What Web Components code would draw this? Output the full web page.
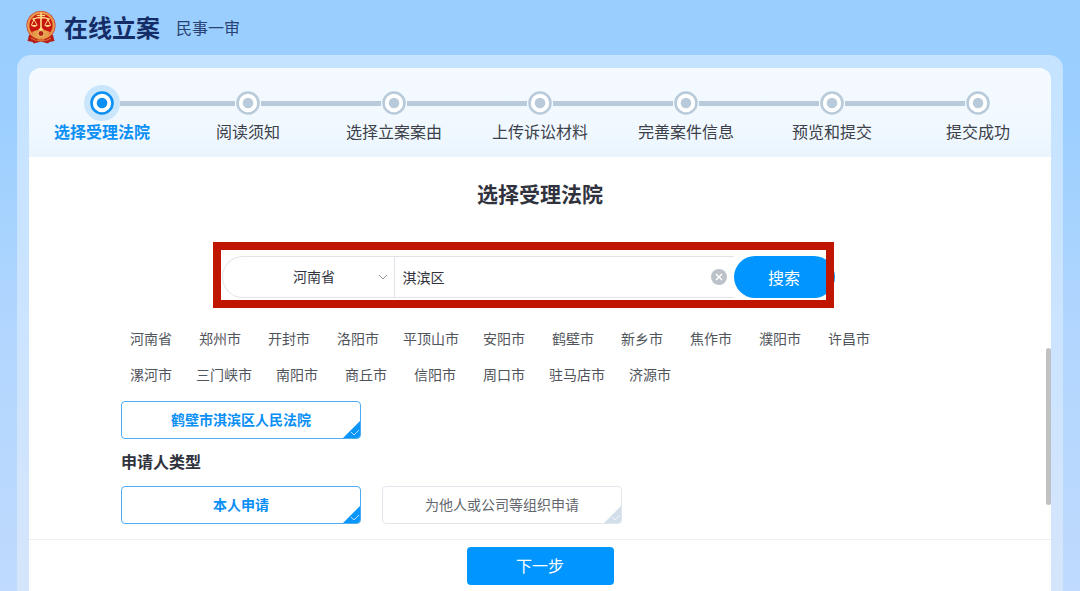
<!DOCTYPE html>
<html lang="zh-CN">
<head>
<meta charset="utf-8">
<meta name="viewport" content="width=device-width, initial-scale=1">
<title>在线立案</title>
<style>
  body {
    margin: 0;
    color: #30333d;
    font: 14px/20px "Noto Sans CJK SC", "Noto Sans", sans-serif;
    background: #a5d2ff;
  }
</style>
</head>
<body>
<filing-app></filing-app>

<script>
const define = (name, html, setup) => {
  const template = document.createElement('template');
  template.innerHTML = html;
  customElements.define(name, class extends HTMLElement {
    constructor() {
      super();
      this.attachShadow({ mode: 'open' }).append(template.content.cloneNode(true));
    }
    connectedCallback() {
      if (setup && !this.ready) setup(this, this.shadowRoot);
      this.ready = true;
    }
  });
};

define('court-emblem', `
  <style>
    :host { display: block; width: 30px; height: 34px; }
    svg { display: block; width: 100%; height: 100%; }
  </style>
  <svg viewBox="0 0 30 34" aria-hidden="true">
    <path d="M3 25 1.500 31l5 1 1.500 1.500 7-2 7 2 1.500-1.500 5-1L27 25z" fill="#b51f18"/>
    <path d="M5 28l5 2.500M25 28l-5 2.500" stroke="#e8803a" stroke-width="1"/>
    <circle cx="15" cy="15.500" r="14.500" fill="#c92a1d"/>
    <circle cx="15" cy="15.500" r="12.800" fill="none" stroke="#e99a4b" stroke-width="2.200"/>
    <circle cx="15" cy="15" r="11" fill="#c8160f"/>
    <path d="M6 22q9-5 18 0l-3 5q-6 3-12 0z" fill="#e6a04c"/>
    <circle cx="15" cy="23.500" r="3" fill="#b32017" stroke="#f3c76c"/>
    <g fill="none" stroke="#ffdc85" stroke-width="1.600" stroke-linecap="round">
      <path d="M15 3v17M11.500 5.500h7M7 9q8-3 16 0"/>
      <path d="M8 9.500 5.500 15M8 9.500l3 5.500M22 9.500 19 15M22 9.500l2.500 5.500" stroke-width="1"/>
    </g>
    <path d="M5 15h6.500q-3 4-6.500 0zM18.500 15H25q-3.500 4-6.500 0zM12 20l3-3 3 3z" fill="#ffdc85"/>
    <path d="M10 30.500q5-4 10 0-5 2-10 0z" fill="#d9702f"/>
  </svg>`);

define('app-header', `
  <style>
    :host { display: flex; align-items: center; height: 53px; padding: 0 26px 2px; color: #142d66; }
    h1 { margin: 0 16px 0 8px; font-size: 24px; line-height: 32px; font-weight: 700; }
    span { font-size: 16px; line-height: 24px; color: #2a4272; }
  </style>
  <court-emblem></court-emblem>
  <h1><slot name="title"></slot></h1>
  <span><slot></slot></span>`);

define('progress-step', `
  <style>
    :host { display: grid; justify-items: center; grid-template-rows: 36px 20px; color: #3c4049; --tone: #b9cbda; --halo: transparent; }
    :host([current]) { color: #0a8ff5; font-weight: 700; --tone: #0a8ff5; --halo: #cae6fc; }
    .rail { display: grid; grid-template-columns: 1fr 36px 1fr; align-items: center; width: 100%; }
    .bar { height: 5px; background: #b9cbda; }
    .bar.before { margin-right: -5px; }
    .bar.after { margin-left: -5px; }
    :host([current]) .after { margin-left: 0; }
    :host([first]) .before, :host([last]) .after { visibility: hidden; }
    svg { display: block; width: 36px; height: 36px; }
    .label { font-size: 16px; line-height: 20px; white-space: nowrap; }
  </style>
  <div class="rail">
    <div class="bar before"></div>
    <svg viewBox="0 0 36 36" aria-hidden="true">
      <circle cx="18" cy="18" r="18" fill="var(--halo)"/>
      <circle cx="18" cy="18" r="10.500" fill="#fff" stroke="var(--tone)" stroke-width="2.600"/>
      <circle cx="18" cy="18" r="5.300" fill="var(--tone)"/>
    </svg>
    <div class="bar after"></div>
  </div>
  <div class="label"><slot></slot></div>`);

define('progress-steps', `
  <style>
    :host {
      display: grid; grid-auto-flow: column; grid-auto-columns: minmax(0, 1fr);
      padding: 17px 0 16px; border-radius: 12px 12px 0 0;
      background: linear-gradient(#f4faff, #f0f8ff 75%, #e9f4fd);
    }
  </style>
  <slot></slot>`);

define('court-search', `
  <style>
    :host { display: block; position: relative; width: 60%; }
    form { display: flex; height: 42px; }
    .field {
      display: flex; flex: 1; min-width: 0; box-sizing: border-box;
      border: 1px solid #e1e3e8; border-right: 0; border-radius: 21px 0 0 21px; background: #fff;
    }
    .province { display: grid; grid-template-columns: 1fr 16px; align-items: center; width: 172px; box-sizing: border-box; border-right: 1px solid #dfe2e8; }
    select, input, button { font: inherit; color: inherit; border: 0; margin: 0; outline: 0; background: none; }
    select { appearance: none; grid-area: 1 / 1 / 2 / 3; width: 100%; height: 40px; padding: 0 0 2px 12px; text-align-last: center; }
    .chevron { grid-area: 1 / 2; width: 10px; height: 6px; pointer-events: none; }
    input { flex: 1; min-width: 0; padding: 0 8px; }
    .clear { display: grid; place-items: center; width: 30px; padding: 0; }
    .clear svg { width: 16px; height: 16px; }
    .go { width: 101px; padding: 0; border-radius: 21px; font-size: 16px; color: #fff; background: #0095ff; }
    .marker { position: absolute; inset: -14px 1px -10px -9px; border: 8px solid #c01600; pointer-events: none; }
  </style>
  <form>
    <div class="field">
      <div class="province">
        <select aria-label="省份"><option>河南省</option></select>
        <svg class="chevron" viewBox="0 0 10 6" fill="none" stroke="#92969d" aria-hidden="true"><path d="M1 1l4 4 4-4"/></svg>
      </div>
      <input type="text" aria-label="法院名称" value="淇滨区">
      <button class="clear" type="button" aria-label="清空">
        <svg viewBox="0 0 16 16" aria-hidden="true"><circle cx="8" cy="8" r="8" fill="#bcc2ca"/><path d="M5 5l6 6M11 5l-6 6" stroke="#fff" stroke-width="1.500"/></svg>
      </button>
    </div>
    <button class="go" type="submit">搜索</button>
  </form>
  <div class="marker"></div>`, (host, root) => {
    const input = root.querySelector('input');
    root.querySelector('.clear').onclick = () => { input.value = ''; input.focus(); };
    root.querySelector('form').onsubmit = event => event.preventDefault();
  });

define('city-list', `
  <style>
    :host { display: block; }
    nav { display: flex; flex-wrap: wrap; gap: 16px 21px; padding: 0 6px; max-width: 760px; }
    a { min-width: 48px; text-align: center; color: #50545b; text-decoration: none; white-space: nowrap; }
  </style>
  <nav aria-label="城市"></nav>`, (host, root) => {
    const nav = root.querySelector('nav');
    for (const city of host.getAttribute('cities').split(' ')) {
      const link = document.createElement('a');
      link.href = '#';
      link.textContent = city;
      nav.append(link);
    }
  });

define('choice-group', `
  <style>
    :host { display: block; }
    fieldset { display: flex; flex-wrap: wrap; gap: 21px; margin: 0; padding: 0; border: 0; min-width: 0; }
    label {
      display: grid; grid-template-columns: 1fr; place-items: center; position: relative;
      width: 240px; height: 38px; padding-bottom: 2px; box-sizing: border-box; overflow: hidden;
      border: 1px solid #e1e6ed; border-radius: 4px; background: #fff; color: #64676d; --mark: #d2deea;
    }
    label:has(:checked) { border-color: #4eadf3; color: #0a8ff5; font-weight: 700; --mark: #0a95fa; }
    input { position: absolute; inset: 0; margin: 0; appearance: none; }
    svg { position: absolute; right: 0; bottom: 0; width: 17px; height: 17px; }
  </style>
  <fieldset></fieldset>`, (host, root) => {
    const set = root.querySelector('fieldset');
    set.setAttribute('aria-label', host.getAttribute('name'));
    host.getAttribute('options').split(' ').forEach((text, i) => {
      const label = document.createElement('label');
      label.innerHTML = `<input type="radio" name="choice"><span></span>
        <svg viewBox="0 0 17 17" aria-hidden="true"><path d="M17 0v17H0z" fill="var(--mark)"/><path d="M8 11l3 3 5-5" fill="none" stroke="#fff" stroke-opacity=".7"/></svg>`;
      label.querySelector('input').checked = i === 0;
      label.querySelector('span').textContent = text;
      set.append(label);
    });
  });

define('form-footer', `
  <style>
    :host { display: flex; justify-content: center; padding: 7px 0 6px; border-top: 1px solid #f0f1f4; }
    button { width: 147px; height: 38px; padding: 0 0 2px; border: 0; border-radius: 4px; font: inherit; font-size: 16px; color: #fff; background: #0095ff; }
  </style>
  <button type="button"><slot></slot></button>`);

define('filing-app', `
  <style>
    :host {
      display: flex; flex-direction: column; min-height: 100vh; box-sizing: border-box;
      background: linear-gradient(#99ceff, #9ccfff 20%, #b1d6ff 55%, #bfdafc);
    }
    .frame {
      flex: 1; display: flex; margin: 0 17px; padding: 13px 12px 0;
      border-radius: 14px 14px 0 0; background: linear-gradient(#c5e3ff, #cbe4ff 50%, #d5e5fb);
    }
    main { flex: 1; min-width: 0; display: flex; flex-direction: column; border-radius: 12px 12px 0 0; background: #fff; }
    .body { flex: 1; position: relative; padding: 22px 9% 15px; }
    h2 { margin: 0 0 49px; font-size: 21px; line-height: 28px; text-align: center; }
    h3 { margin: 10px 0 13px; font-size: 16px; line-height: 24px; }
    .search { display: flex; justify-content: center; margin: 0 -9vw; }
    court-search { margin-right: 24px; width: 613px; }
    city-list { margin: 30px 0 17px; }
    .thumb { position: absolute; right: 0; top: 50%; width: 5px; height: 41%; border-radius: 3px; background: #c0c1c3; }
  </style>
  <app-header><span slot="title">在线立案</span>民事一审</app-header>
  <div class="frame">
    <main>
      <progress-steps>
        <progress-step first current>选择受理法院</progress-step>
        <progress-step>阅读须知</progress-step>
        <progress-step>选择立案案由</progress-step>
        <progress-step>上传诉讼材料</progress-step>
        <progress-step>完善案件信息</progress-step>
        <progress-step>预览和提交</progress-step>
        <progress-step last>提交成功</progress-step>
      </progress-steps>
      <div class="body">
        <h2>选择受理法院</h2>
        <div class="search"><court-search></court-search></div>
        <city-list cities="河南省 郑州市 开封市 洛阳市 平顶山市 安阳市 鹤壁市 新乡市 焦作市 濮阳市 许昌市 漯河市 三门峡市 南阳市 商丘市 信阳市 周口市 驻马店市 济源市"></city-list>
        <choice-group name="受理法院" options="鹤壁市淇滨区人民法院"></choice-group>
        <h3>申请人类型</h3>
        <choice-group name="申请人类型" options="本人申请 为他人或公司等组织申请"></choice-group>
        <div class="thumb"></div>
      </div>
      <form-footer>下一步</form-footer>
    </main>
  </div>`);
</script>
</body>
</html>
